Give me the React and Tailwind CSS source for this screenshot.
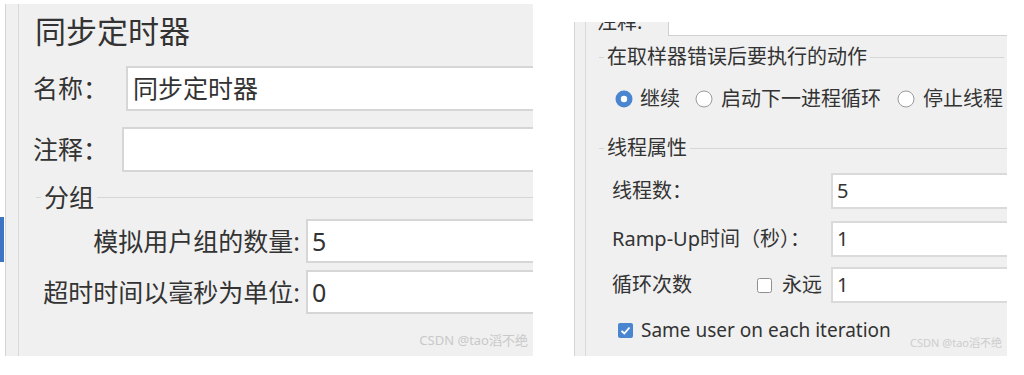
import React from "react";

const FONT = { fontFamily: '"Noto Sans", "Noto Sans CJK SC", sans-serif' };

/* small swing-like widgets */
function Radio({ checked }) {
  return (
    <svg width="18" height="18" viewBox="0 0 18 18" className="shrink-0">
      {checked ? (
        <>
          <circle cx="9" cy="9" r="8.5" fill="#4a86cf" />
          <circle cx="9" cy="9" r="3.2" fill="#ffffff" />
        </>
      ) : (
        <circle cx="9" cy="9" r="8" fill="#ffffff" stroke="#9a9a9a" strokeWidth="1" />
      )}
    </svg>
  );
}

function Check({ checked }) {
  return (
    <svg width="15" height="15" viewBox="0 0 15 15" className="shrink-0">
      {checked ? (
        <>
          <rect x="0" y="0" width="15" height="15" rx="2" fill="#4a86cf" />
          <path d="M3.5 7.8 L6.3 10.5 L11.5 4.5" fill="none" stroke="#ffffff" strokeWidth="1.8" />
        </>
      ) : (
        <rect x="0.5" y="0.5" width="14" height="14" rx="2" fill="#ffffff" stroke="#8f8f8f" />
      )}
    </svg>
  );
}

function Legend({ text, className = "" }) {
  return (
    <div className={`flex items-center ${className}`}>
      <div className="h-px bg-[#d6d6d6] shrink-0 w-[5px]" />
      <span className="mx-[3px] whitespace-nowrap">{text}</span>
      <div className="h-px bg-[#d6d6d6] flex-1" />
    </div>
  );
}

function LeftPanel() {
  return (
    <div className="mt-[4px] h-[352px] w-[528px] bg-[#f0f0f0] border-l border-[#d4d4d4] flex overflow-hidden relative text-[#333]">
      <div className="ml-[12px] border-l border-[#dadada] flex-1 flex flex-col text-[25px] leading-[25px]">
        {/* title */}
        <div className="mt-[12px] pl-[16px] text-[31px] leading-[31px]">同步定时器</div>

        {/* name */}
        <div className="mt-[19px] h-[45px] flex items-center">
          <div className="w-[107px] pl-[14px] shrink-0">名称：</div>
          <div className="flex-1 h-full bg-white border-2 border-r-0 border-[#d6d6d6] flex items-center pl-[5px]">
            同步定时器
          </div>
        </div>

        {/* comment */}
        <div className="mt-[16px] h-[45px] flex items-center">
          <div className="w-[103px] pl-[14px] shrink-0">注释：</div>
          <div className="flex-1 h-full bg-white border-2 border-r-0 border-[#d6d6d6]" />
        </div>

        {/* group */}
        <Legend text="分组" className="mt-[14px] h-[22px] pl-[17px]" />

        <div className="mt-[11px] h-[44px] flex items-center">
          <div className="w-[281px] text-right shrink-0">模拟用户组的数量:</div>
          <div className="ml-[6px] flex-1 h-full bg-white border-2 border-r-0 border-[#d6d6d6] flex items-center pl-[4px]">
            5
          </div>
        </div>
        <div className="mt-[7px] h-[44px] flex items-center">
          <div className="w-[281px] text-right shrink-0">超时时间以毫秒为单位:</div>
          <div className="ml-[6px] flex-1 h-full bg-white border-2 border-r-0 border-[#d6d6d6] flex items-center pl-[4px]">
            0
          </div>
        </div>
      </div>
      <div className="absolute right-[5px] bottom-[8px] text-[13px] leading-[15px] text-[#c9c9c9]">CSDN @tao滔不绝</div>
    </div>
  );
}

function Field({ value }) {
  return (
    <div className="flex-1 h-full bg-white border-2 border-r-0 border-[#dadada] flex items-center pl-[4px]">
      {value}
    </div>
  );
}

function RightPanel() {
  return (
    <div className="mt-[22px] h-[334px] w-[433px] bg-[#f0f0f0] border-l border-[#d4d4d4] flex overflow-hidden relative text-[#333]">
      <div className="ml-[10px] border-l border-[#dadada] flex-1 flex flex-col text-[20px] leading-[20px]">
        {/* comment row, cut off at the top of the shot */}
        <div className="h-[14px] flex items-start">
          <div className="w-[82px] pl-[11px] shrink-0 mt-[-10px]">注释:</div>
          <div className="flex-1 h-full bg-white border-l border-b border-[#d0d0d0]" />
        </div>

        <Legend text="在取样器错误后要执行的动作" className="mt-[11px] h-[20px] pl-[13px] pr-[3px]" />

        <div className="mt-[22px] h-[20px] flex items-center pl-[29px]">
          <Radio checked />
          <span className="ml-[7px]">继续</span>
          <span className="ml-[15px] flex items-center">
            <Radio />
            <span className="ml-[8px]">启动下一进程循环</span>
          </span>
          <span className="ml-[16px] flex items-center">
            <Radio />
            <span className="ml-[8px] whitespace-nowrap">停止线程</span>
          </span>
        </div>

        <Legend text="线程属性" className="mt-[29px] h-[20px] pl-[13px]" />

        <div className="mt-[15px] h-[36px] flex items-center pl-[26px]">
          <div className="w-[219px] shrink-0">线程数：</div>
          <Field value="5" />
        </div>
        <div className="mt-[12px] h-[36px] flex items-center pl-[26px]">
          <div className="w-[219px] shrink-0">Ramp-Up时间（秒）：</div>
          <Field value="1" />
        </div>
        <div className="mt-[10px] h-[36px] flex items-center pl-[26px]">
          <div className="w-[219px] shrink-0 flex items-center">
            <span className="w-[145px]">循环次数</span>
            <Check />
            <span className="ml-[10px]">永远</span>
          </div>
          <Field value="1" />
        </div>

        <div className="mt-[17px] h-[20px] flex items-center pl-[32px]">
          <Check checked />
          <span className="ml-[8px] text-[19px]">Same user on each iteration</span>
        </div>
      </div>
      <div className="absolute right-[5px] bottom-[7px] text-[11px] leading-[13px] text-[#cdcdcd]">CSDN @tao滔不绝</div>
    </div>
  );
}

export default function App() {
  return (
    <div className="w-[1024px] h-[375px] bg-white flex items-start overflow-hidden" style={FONT}>
      <div className="w-[5px] shrink-0">
        <div className="mt-[217px] h-[45px] w-[4px] bg-[#3f74c4]" />
      </div>
      <LeftPanel />
      <div className="w-[41px] shrink-0" />
      <RightPanel />
    </div>
  );
}
